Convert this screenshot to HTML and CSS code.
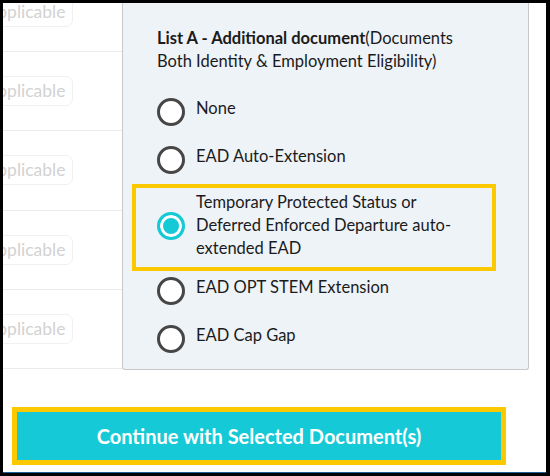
FILE: index.html
```html
<!DOCTYPE html>
<html lang="en">
<head>
<meta charset="utf-8">
<title>Additional document</title>
<link rel="stylesheet" href="styles.css">
</head>
<body>
<div class="frame">
  <div class="main">
    <div class="rows">
      <div class="row"><span class="badge">Not applicable</span></div>
      <div class="row"><span class="badge">Not applicable</span></div>
      <div class="row"><span class="badge">Not applicable</span></div>
      <div class="row"><span class="badge">Not applicable</span></div>
      <div class="row"><span class="badge">Not applicable</span></div>
    </div>
    <div class="panel">
      <p class="heading"><strong>List A - Additional document</strong>(Documents Both Identity &amp; Employment Eligibility)</p>
      <div class="options">
        <label class="option"><span class="radio"></span><span class="label">None</span></label>
        <label class="option"><span class="radio"></span><span class="label">EAD Auto-Extension</span></label>
        <label class="option selected"><span class="radio checked"></span><span class="label">Temporary Protected Status or Deferred Enforced Departure auto-extended EAD</span></label>
        <label class="option"><span class="radio"></span><span class="label">EAD OPT STEM Extension</span></label>
        <label class="option"><span class="radio"></span><span class="label">EAD Cap Gap</span></label>
      </div>
    </div>
    <div class="gutter"></div>
  </div>
  <div class="footer">
    <button class="continue" type="button">Continue with Selected Document(s)</button>
  </div>
</div>
</body>
</html>
```

FILE: styles.css
```css
html, body {
  margin: 0;
  padding: 0;
  background: #000;
}
body {
  font-family: Lato, "Noto Sans", sans-serif;
  color: #1b1b1b;
  width: 550px;
  height: 476px;
  overflow: hidden;
}
.frame {
  margin: 3px 4px 3px 3px;
  height: 470px;
  box-sizing: border-box;
  background: #fff;
  border-bottom: 1px solid #1f5e99;
  overflow: hidden;
}
.main {
  display: flex;
  height: 367px;
}
.rows {
  width: 119px;
  flex: none;
  overflow: hidden;
}
.row {
  height: 79.25px;
  box-sizing: border-box;
  border-bottom: 1px solid #ebebeb;
  display: flex;
  align-items: center;
}
.row:first-child {
  margin-top: -30.25px;
}
.badge {
  flex: none;
  margin-left: -56px;
  padding: 0 7px;
  height: 30px;
  line-height: 28px;
  box-sizing: border-box;
  border: 1px solid #f0f0f0;
  border-radius: 7px;
  font-size: 17.5px;
  color: #d2d2d2;
  white-space: nowrap;
}
.panel {
  width: 407px;
  flex: none;
  box-sizing: border-box;
  background: #eef3f8;
  border: 1px solid #c8c8c8;
  border-top: none;
  border-radius: 0 0 3px 3px;
  padding: 24px 36px 6px 13px;
}
.heading {
  margin: 0 0 15px;
  padding: 0 8px 0 21px;
  font-size: 16.5px;
  line-height: 23px;
}
.heading strong {
  font-weight: 700;
}
.options {
  display: flex;
  flex-direction: column;
}
.option {
  display: flex;
  align-items: center;
  gap: 11px;
  padding: 10px 22px 10px 21px;
  font-size: 16.5px;
  line-height: 23px;
}
.label {
  margin-top: -7px;
}
.option.selected {
  margin-top: 4px;
  padding-top: 3px;
  padding-bottom: 7px;
  outline: 4px solid #fcc800;
}
.option.selected .label {
  margin-top: 0;
}
.radio {
  flex: none;
  width: 28px;
  height: 28px;
  box-sizing: border-box;
  border: 3px solid #464646;
  border-radius: 50%;
  background: #fff;
}
.radio.checked {
  border-color: #15cad6;
  background: #15cad6;
  box-shadow: inset 0 0 0 3px #fff;
}
.gutter {
  flex: 1;
}
.footer {
  padding: 42px 0 0 14px;
}
.continue {
  display: block;
  width: 484px;
  height: 48px;
  margin: 0;
  border: none;
  background: #15cad6;
  outline: 5px solid #fcc800;
  color: #fff;
  font-family: Lato, "Noto Sans", sans-serif;
  font-weight: 700;
  font-size: 20px;
  padding: 0;
}
```
